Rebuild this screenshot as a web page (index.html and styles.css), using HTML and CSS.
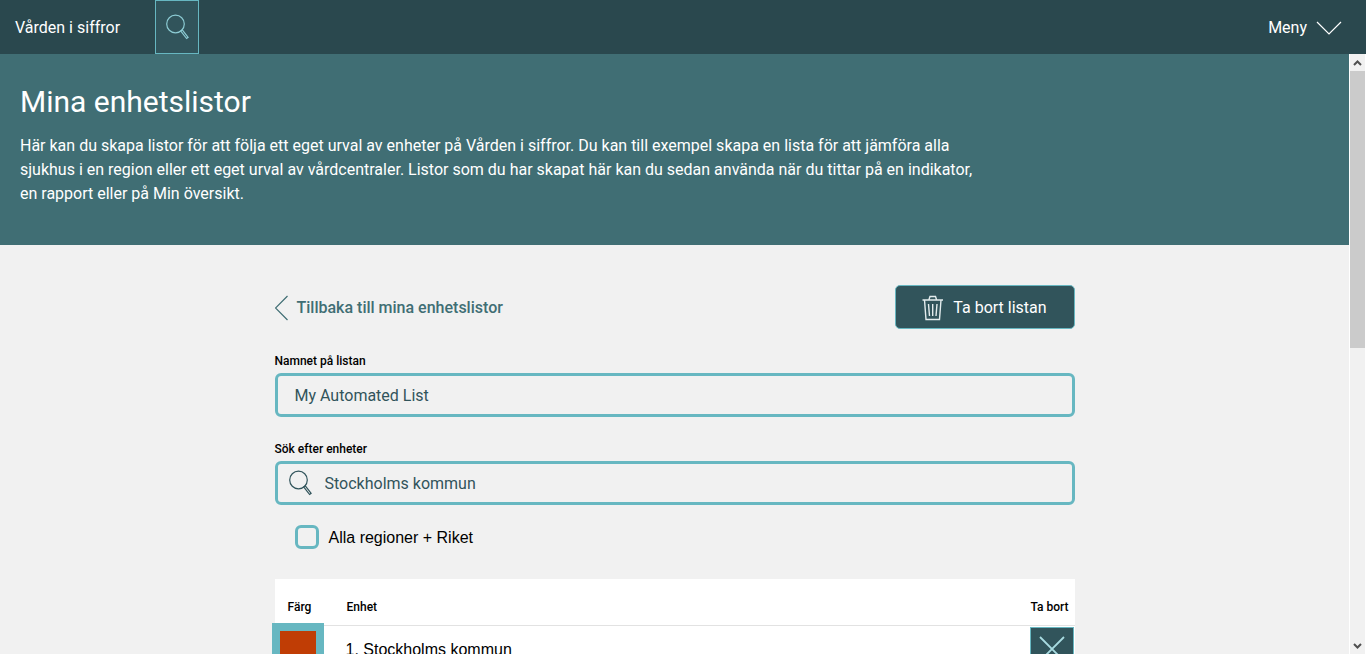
FILE: index.html
```html
<!DOCTYPE html>
<html lang="sv">
<head>
<meta charset="utf-8">
<meta name="viewport" content="width=device-width, initial-scale=1">
<title>Mina enhetslistor - Vården i siffror</title>
<link rel="stylesheet" href="styles.css">
</head>
<body>
<header class="topbar">
  <a class="brand" href="#">Vården i siffror</a>
  <button class="search-toggle" type="button" aria-label="Sök">
    <svg class="icon" viewBox="0 0 24 26" aria-hidden="true"><circle cx="9.500" cy="10" r="8.800"/><path d="M14.800 17l1.500-1.200 5.800 7.500-1.500 1.200z"/></svg>
  </button>
  <button class="menu" type="button">Meny
    <svg class="menu-arrow" viewBox="0 0 26 14" aria-hidden="true"><path d="M1 1l12 12L25 1"/></svg>
  </button>
</header>
<div class="viewport">
  <main class="page">
    <section class="hero">
      <h1 class="title">Mina enhetslistor</h1>
      <p class="intro">Här kan du skapa listor för att följa ett eget urval av enheter på Vården i siffror. Du kan till exempel skapa en lista för att jämföra alla sjukhus i en region eller ett eget urval av vårdcentraler. Listor som du har skapat här kan du sedan använda när du tittar på en indikator, en rapport eller på Min översikt.</p>
    </section>
    <section class="editor">
      <div class="actions">
        <a class="back" href="#">
          <svg class="back-arrow" viewBox="0 0 14 26" aria-hidden="true"><path d="M12.500 1L.5 13l12 12"/></svg>
          Tillbaka till mina enhetslistor
        </a>
        <button class="delete" type="button">
          <svg class="trash" viewBox="0 0 22 26" aria-hidden="true"><path d="M.5 5h20.500M7 4.500l1-3h5.500l1 3M2.500 5L4 24.500h13.500L19 5M6.500 9l1 12M10.700 9v12M15 9l-1 12"/></svg>
          Ta bort listan
        </button>
      </div>
      <label class="label" for="list-name">Namnet på listan</label>
      <input class="field" id="list-name" type="text" value="My Automated List">
      <label class="label label-search" for="unit-search">Sök efter enheter</label>
      <div class="field search">
        <svg class="icon" viewBox="0 0 24 26" aria-hidden="true"><circle cx="9.500" cy="10" r="8.800"/><path d="M14.800 17l1.500-1.200 5.800 7.500-1.500 1.200z"/></svg>
        <input class="search-input" id="unit-search" type="text" value="Stockholms kommun">
      </div>
      <label class="check"><input class="checkbox" type="checkbox"><span class="check-text">Alla regioner + Riket</span></label>
      <table class="units">
        <thead>
          <tr><th class="col-color" scope="col">Färg</th><th class="col-unit" scope="col">Enhet</th><th class="col-remove" scope="col">Ta bort</th></tr>
        </thead>
        <tbody>
          <tr>
            <td class="cell-color"><button class="swatch" type="button" aria-label="Välj färg"></button></td>
            <td class="cell-unit">1. Stockholms kommun</td>
            <td class="cell-remove"><button class="remove" type="button" aria-label="Ta bort enhet"><svg class="cross" viewBox="0 0 26 26" aria-hidden="true"><path d="M1 1l24 24M25 1L1 25"/></svg></button></td>
          </tr>
        </tbody>
      </table>
    </section>
  </main>
  <div class="scrollbar" aria-hidden="true">
    <svg class="scroll-arrow" viewBox="0 0 15 17"><path d="M4 11l3.500-3.500 3.500 3.500"/></svg>
    <div class="track"><div class="thumb"></div></div>
    <svg class="scroll-arrow" viewBox="0 0 15 17"><path d="M4 7l3.500 3.500L11 7"/></svg>
  </div>
</div>
</body>
</html>
```

FILE: styles.css
```css
* { box-sizing: border-box; }
body {
  margin: 0;
  height: 100vh;
  display: flex;
  flex-direction: column;
  overflow: hidden;
  background: #f1f1f1;
  color: #000;
  font: 16px/24px Roboto, sans-serif;
}
button, input { font: inherit; color: inherit; margin: 0; }
button { cursor: pointer; }
svg { display: block; fill: none; flex: none; }

.topbar {
  display: flex;
  align-items: stretch;
  height: 54px;
  flex: none;
  background: #2a484e;
  color: #fff;
}
.brand {
  display: flex;
  align-items: center;
  width: 155px;
  padding: 2px 0 0 15px;
  color: inherit;
  text-decoration: none;
}
.search-toggle {
  width: 44px;
  padding: 0 10px;
  display: flex;
  align-items: center;
  background: #31545b;
  border: 1px solid #67b7c1;
  color: #8ccbd3;
}
.icon { width: 24px; height: 26px; stroke: currentColor; stroke-width: 1.2; }
.menu {
  display: flex;
  align-items: center;
  gap: 9px;
  margin-left: auto;
  padding: 2px 24px 0;
  border: 0;
  background: none;
}
.menu-arrow { width: 26px; height: 14px; stroke: #fff; stroke-width: 1.2; }

.viewport { display: flex; flex: 1; min-height: 0; }
.page { flex: 1; min-width: 0; overflow: hidden; }
.hero {
  padding: 28px 20px 39px;
  background: #406e74;
  color: #fff;
}
.title { margin: 0 0 13px; font-size: 30px; line-height: 39px; font-weight: 400; }
.intro { margin: 0; max-width: 960px; }

.editor { max-width: 800px; margin: 0 auto; padding-top: 40px; }
.actions {
  display: flex;
  justify-content: space-between;
  align-items: center;
  margin-bottom: 24px;
}
.back {
  display: flex;
  align-items: center;
  gap: 8px;
  padding-top: 2px;
  color: #406e74;
  font-weight: 500;
  text-decoration: none;
}
.back-arrow { width: 14px; height: 26px; stroke: currentColor; stroke-width: 1.2; }
.delete {
  display: flex;
  justify-content: center;
  align-items: center;
  gap: 9px;
  width: 180px;
  height: 44px;
  padding: 2px 0 0;
  border: 1px solid #67b7c1;
  border-radius: 5px;
  background: #31545b;
  color: #fff;
}
.trash { width: 22px; height: 26px; stroke: #e3eced; stroke-width: 1.4; }

.label { display: block; font-size: 12px; line-height: 16px; font-weight: 500; margin-bottom: 4px; }
.label-search { margin-top: 24px; }
.field {
  display: block;
  width: 100%;
  height: 44px;
  padding: 0 17px;
  border: 3px solid #67b7c1;
  border-radius: 6px;
  background: #f1f1f1;
  color: #31545b;
}
.search { display: flex; align-items: center; gap: 12px; padding: 0 11px; }
.search-input { flex: 1; min-width: 0; padding: 2px 0 0; border: 0; background: none; }
.check {
  display: flex;
  align-items: center;
  gap: 10px;
  height: 24px;
  margin: 20px 20px 30px;
  font-family: "Liberation Sans", Arial, sans-serif;
}
.check-text { padding-top: 2px; }
.checkbox {
  appearance: none;
  width: 24px;
  height: 24px;
  border: 3px solid #67b7c1;
  border-radius: 6px;
}

.units { width: 100%; border-collapse: collapse; table-layout: fixed; background: #fff; }
.units th {
  height: 46px;
  padding: 10px 0 0 1px;
  border-bottom: 1px solid #e2e2e2;
  font-size: 12px;
  line-height: 16px;
  font-weight: 500;
  text-align: left;
}
.units .col-color { width: 71px; padding-left: 13px; }
.units .col-remove { width: 45px; }
.units td { height: 48px; padding: 0; }
.units .cell-unit { padding-top: 2px; font-family: "Liberation Sans", Arial, sans-serif; }
.swatch {
  position: relative;
  display: block;
  width: 52px;
  height: 52px;
  margin: -4px 0 -4px -3px;
  border: 8px solid #67b7c1;
  background: #c03d05;
}
.remove {
  display: flex;
  align-items: center;
  justify-content: center;
  width: 44px;
  height: 44px;
  padding: 0;
  border: 1px solid #67b7c1;
  background: #31545b;
}
.cross { width: 26px; height: 26px; stroke: #a8dbe1; stroke-width: 1.8; }

.scrollbar {
  display: flex;
  flex-direction: column;
  width: 17px;
  border: solid #fff;
  border-width: 0 1px;
  background: #f1f1f1;
}
.scroll-arrow { width: 15px; height: 17px; stroke: #505050; stroke-width: 2; }
.track { flex: 1; }
.thumb { height: 49%; background: #cbcbcb; }
```
